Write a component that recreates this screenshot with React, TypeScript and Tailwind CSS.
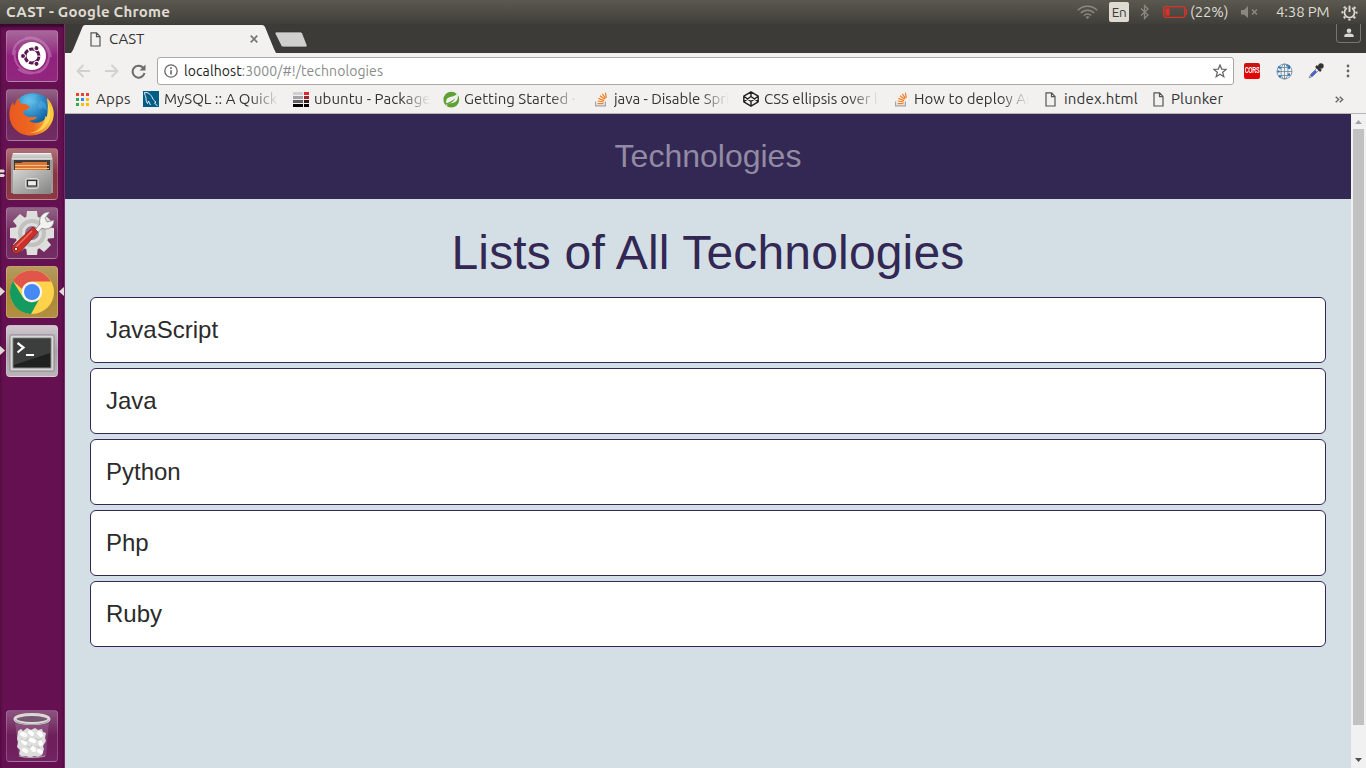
import React from "react";

const uiFont = "font-['Ubuntu','Noto_Sans',sans-serif]";

function DocIcon({ className = "" }: { className?: string }) {
  return (
    <svg width="11" height="15" viewBox="0 0 11 15" className={className} fill="none" stroke="#555" strokeWidth="1.2">
      <path d="M1 .8h5.6L10 4.4v9.6H1zM6.5 1v3.6H10" />
    </svg>
  );
}

function StackIcon() {
  return (
    <svg width="12" height="15" viewBox="0 0 12 15" fill="none">
      <path d="M.6 9.5v4.4h9.8V9.5" stroke="#a0a3a5" strokeWidth="1.2" />
      <path d="M2.5 11.7h6M2.7 9l6 1M3.4 6.4l5.7 2.2M5 3.8l4.8 3.4M7.4 1.8l3.1 4.6M10.4.6l.9 5.2" stroke="#f48024" strokeWidth="1.2" />
    </svg>
  );
}

function AppsIcon() {
  const colors = ["#ea4335", "#ea4335", "#ea4335", "#34a853", "#4285f4", "#fbbc05", "#34a853", "#fbbc05", "#fbbc05"];
  return (
    <svg width="13" height="13" viewBox="0 0 13 13">
      {colors.map((c, i) => (
        <rect key={i} x={(i % 3) * 5} y={Math.floor(i / 3) * 5} width="3" height="3" fill={c} />
      ))}
    </svg>
  );
}

function MySqlIcon() {
  return (
    <svg width="16" height="16" viewBox="0 0 16 16" fill="none">
      <rect width="16" height="16" fill="#005d87" />
      <path d="M1.5 1.5C5 1 8 3.500 9.500 7c.8 2 2 3 3.500 4.200L11.500 12l3 3M1.500 1.500C1.500 4 3 5 3 7.500c0 2 .5 4 1.500 5L5.500 10l2 4" stroke="#fff" strokeWidth=".9" />
    </svg>
  );
}

function PackageIcon() {
  const rows = [["#d0d0d4", "#e8242c"], ["#a3a3a8", "#98242c"], ["#606064", "#38161a"], ["#000", "#000"]];
  return (
    <svg width="16" height="16" viewBox="0 0 16 16" shapeRendering="crispEdges">
      {rows.map(([a, b], i) => (
        <g key={i}>
          <rect y={i * 4 + 1} width="10" height="3" fill={a} />
          <rect x="11" y={i * 4 + 1} width="5" height="3" fill={b} />
        </g>
      ))}
    </svg>
  );
}

function SpringIcon() {
  return (
    <svg width="17" height="17" viewBox="0 0 17 17">
      <circle cx="8.300" cy="8.700" r="7.900" fill="#5fa134" />
      <path d="M14.300 2C15.500 6 15 9 12.500 10.800C9.500 12.800 6 12 3.300 12.300C2.800 9.500 3.500 7 7 6C10.500 5.200 13 4.700 14.300 2z" fill="#f2f1f0" />
      <path d="M3 13.500c4-.5 7.500-2.500 9.500-6.500-2.500 2.500-5.500 4-9 5.200z" fill="#5fa134" />
      <circle cx="3.700" cy="14" r=".7" fill="#f2f1f0" />
    </svg>
  );
}

function CodepenIcon() {
  return (
    <svg width="16" height="16" viewBox="0 0 16 16" fill="none" stroke="#222" strokeWidth="1.400" strokeLinejoin="round">
      <path d="M8 .8l7.200 4.400v5.600L8 15.200.8 10.800V5.200zM8 .8v4.700M8 10.500v4.700M.8 5.200L8 10.500l7.200-5.300M.8 10.800L8 5.500l7.200 5.300" />
    </svg>
  );
}

type Bookmark = { icon: React.ReactNode; label: string; box: string; text: string; fade?: boolean };

const bookmarks: Bookmark[] = [
  { icon: <AppsIcon />, label: "Apps", box: "w-[67px] gap-[7px]", text: "tracking-[0.2px]" },
  { icon: <MySqlIcon />, label: "MySQL :: A Quick", box: "w-[150px] gap-[5px]", text: "w-[115px]", fade: true },
  { icon: <PackageIcon />, label: "ubuntu - Package", box: "w-[150px] gap-[5px]", text: "w-[116px] tracking-[0.05px]", fade: true },
  { icon: <SpringIcon />, label: "Getting Started · ", box: "w-[152px] gap-[4px]", text: "w-[115px]", fade: true },
  { icon: <StackIcon />, label: "java - Disable Spri", box: "w-[148px] gap-[7px]", text: "w-[115px] tracking-[-0.05px]", fade: true },
  { icon: <CodepenIcon />, label: "CSS ellipsis over li", box: "w-[152px] gap-[5px]", text: "w-[115px] tracking-[-0.05px]", fade: true },
  { icon: <StackIcon />, label: "How to deploy An", box: "w-[150px] gap-[7px]", text: "w-[115px] tracking-[0.05px]", fade: true },
  { icon: <DocIcon />, label: "index.html", box: "w-[108px] gap-[8px]", text: "tracking-[0.2px]" },
  { icon: <DocIcon />, label: "Plunker", box: "gap-[7px]", text: "tracking-[0.15px]" },
];

function TopBar() {
  return (
    <header className="flex h-6 shrink-0 items-center bg-linear-to-b from-[#5b594f] to-[#403f3a] pl-[6px] text-[#dfdbd2]">
      <span className="w-[1071px] text-[15px] leading-6 font-bold tracking-[0.25px] whitespace-nowrap">CAST - Google Chrome</span>
      <svg width="21" height="16" viewBox="0 0 21 16" fill="none" stroke="#8b887f" strokeWidth="1.500">
        <path d="M.8 6.300C6 .8 15 .8 20.200 6.300M3.800 9c3.500-3.800 9.900-3.800 13.400 0M6.900 11.600c2-2.200 5.200-2.200 7.200 0" />
        <path d="M8.500 13l2 2 2-2c-1-1-3-1-4 0z" fill="#8b887f" stroke="none" />
      </svg>
      <span className="ml-[11px] flex h-5 w-5 items-center justify-center rounded-[2px] bg-[#dfdbd2] text-[13.500px] tracking-[-0.4px] text-[#3c3b37]">En</span>
      <svg width="10" height="16" viewBox="0 0 10 16" className="ml-[11px]" fill="none" stroke="#8b887f" strokeWidth="1.300">
        <path d="M1 4.500l7 6.500-3.500 3.500v-13L8 5 1 11.500" />
      </svg>
      <svg width="25" height="14" viewBox="0 0 25 14" className="ml-[13px]" fill="none">
        <rect x=".8" y="1.700" width="21" height="10.600" rx="1.500" stroke="#e0302b" strokeWidth="1.300" />
        <path d="M22 4.500h1.500v5H22" stroke="#e0302b" />
        <rect x="2.500" y="3.500" width="4" height="7" fill="#e0302b" />
      </svg>
      <span className="ml-[2px] w-[50px] text-[15px] tracking-[-0.1px]">(22%)</span>
      <svg width="19" height="14" viewBox="0 0 19 14" fill="#8b887f">
        <path d="M1 5h3l4-4v12L4 9.500H1z" />
        <path d="M12 4.500l5 5m0-5l-5 5" stroke="#8b887f" strokeWidth="1.500" />
      </svg>
      <span className="ml-[17px] w-[65px] text-[15px] tracking-[-0.15px] whitespace-nowrap">4:38 PM</span>
      <svg width="17" height="17" viewBox="0 0 17 17" fill="none" stroke="#dfdbd2">
        <circle cx="8.500" cy="8.500" r="5" strokeWidth="1.700" />
        <circle cx="8.500" cy="8.500" r="7" strokeWidth="2" strokeDasharray="2.200 3.298" strokeDashoffset="1.100" />
        <path d="M8.500 0v7.500" stroke="#4b4942" strokeWidth="4.600" />
        <path d="M8.500 1.500v6.500" strokeWidth="1.900" />
      </svg>
    </header>
  );
}

function UbuntuArt() {
  return (
    <g>
      <path d="M7 25c0-17 20-21 31-11 8 9 6 22-4 28M19 8c13-3 24 6 26 19M9 20c-3 16 10 25 25 22M12 39c10 8 27 5 31-11" stroke="#e1a2d5" strokeOpacity=".4" strokeWidth="2" fill="none" />
      <circle cx="26" cy="26" r="14" fill="#fff" />
      <circle cx="26" cy="26" r="7" fill="none" stroke="#5c1750" strokeWidth="3" strokeDasharray="13.200 1.460" strokeDashoffset="-.7" />
      {[0, 120, 240].map((a) => (
        <circle key={a} cx="17" cy="26" r="2.500" fill="#5c1750" stroke="#fff" strokeWidth="1" transform={`rotate(${a} 26 26)`} />
      ))}
    </g>
  );
}

function FirefoxArt() {
  return (
    <g>
      <circle cx="27" cy="24" r="20" fill="url(#globe)" />
      <path d="M18 9c3-3 9-5 14-3l-3 4 3 3-5 2-4-1-3 2-4-2zM35 11l5 4 1 6-4-2-4 1-1-4z" fill="#65bdec" opacity=".35" />
      <path d="M41 9c7 7 9 18 4 26-7 13-27 16-37 4C2 32 2 20 7 13l1 4 4-8 3 6c4-1 7 1 9 3-2 3-6 3-7 5 1 3 4 5 8 5 3 0 4-1 6 1-3 2-6 2-8 3 8 4 15 1 18-5 3-7 0-11 0-18z" fill="url(#fox)" />
      <path d="M42 14c4 8 3 17-2 23-5 6-11 7-16 7 10-2 15-9 15-17l2 1z" fill="#ffe566" opacity=".7" />
    </g>
  );
}

function FilesArt() {
  return (
    <g>
      <path d="M7 5h38l2 7v5H5v-5z" fill="url(#metal)" />
      <path d="M5 11h42v34H5z" fill="#9b9b99" />
      <path d="M6 11h40M7 5.500h38" stroke="#f4f4f2" />
      <path d="M8 12h36v10H8z" fill="#403a38" />
      <path d="M9 15h6l2-1h24v8H9z" fill="#d87538" />
      <path d="M9 17.500h34M9 20.500h34" stroke="#ffc27c" strokeWidth="1.200" />
      <path d="M7 22h38v24H7z" fill="url(#cabinet)" />
      <rect x="19.500" y="30.500" width="13" height="10" rx="2" fill="#aaa" stroke="#d9d9d9" />
      <rect x="21.500" y="32.500" width="9" height="5.500" fill="#eee" stroke="#333" strokeWidth="1.200" />
    </g>
  );
}

function SettingsArt() {
  return (
    <g>
      {[0, 45, 90, 135, 180, 225, 270, 315].map((a) => (
        <path key={a} d="M20 13l1-9h10l1 9z" fill="#dededc" transform={`rotate(${a} 26 26)`} />
      ))}
      <circle cx="26" cy="26" r="17" fill="#dededc" />
      <circle cx="26" cy="26" r="12" fill="none" stroke="#c1c1c1" strokeWidth="4" />
      <circle cx="26" cy="26" r="7" fill="#9a7090" />
      <path d="M28 24l6-7c-2-6 3-13 10-12l-5 6 2 4 7-2c0 7-6 11-12 8l-6 7z" fill="#f2f2f0" stroke="#777" strokeWidth=".7" />
      <path d="M27 20l5 5-18 20c-3 3-9 1-8-4 0-2 2-3 3-4z" fill="#cd3029" stroke="#7c211b" strokeWidth=".8" />
      <path d="M26 24L10 40" stroke="#ee7268" strokeWidth="1.500" />
      <circle cx="10" cy="42" r="1.800" fill="#f5e9e6" stroke="#742019" />
    </g>
  );
}

function ChromeArt() {
  return (
    <g>
      <circle cx="26" cy="26" r="22" fill="#ffd24c" />
      <path d="M6.900 15A22 22 0 0 1 45 15.500H26A10.500 10.500 0 0 0 16 23z" fill="#e1554a" />
      <path d="M6.900 15A22 22 0 0 0 25 48l8-14.500A10.500 10.500 0 0 1 16.900 31.200z" fill="#149b60" />
      <circle cx="26" cy="26" r="10.200" fill="#f6f5f2" />
      <circle cx="26" cy="26" r="8" fill="#4688f4" />
    </g>
  );
}

function TerminalArt() {
  return (
    <g>
      <rect x="4" y="10" width="44" height="36" rx="1" fill="#d8d8d6" stroke="#8b8589" />
      <rect x="7" y="13" width="38" height="30" fill="#1f2120" stroke="#898b89" />
      <path d="M8 14h36v14L8 40z" fill="#4b4e4c" opacity=".65" />
      <path d="M11.500 18l6 4.500-6 5" stroke="#fff" strokeWidth="2.200" fill="none" />
      <path d="M20 30h8" stroke="#fff" strokeWidth="2" />
    </g>
  );
}

function TrashArt() {
  return (
    <g>
      <path d="M9 11l4 35c3 3 23 3 27 0l3-35z" fill="#d9c2d5" opacity=".2" />
      <path d="M12 21l3-2 2 2 4-3 4 2 4-2 3 2 4-1 1 3 3 1-1 5 1 3-3 5 1 3-2 6-4 2-4-1-4 2-4-2-4 1-3-3 1-4-3-3 1-5-1-3z" fill="#dededc" />
      <path d="M16 24l3 1M24 22l2 2M33 23l2 2M17 31l2 2M25 30l3 1M34 32l1 2M18 40l2 1M26 38l2 2M33 41l2 1" stroke="#fff" strokeWidth="4" strokeLinecap="round" />
      <path d="M15 29l5 2 2-3M29 28l3 2 4-1M21 36l3 2 2-3M30 36l4 2" stroke="#b5b5b0" strokeWidth=".8" fill="none" />
      <path d="M13 46c7 2 19 2 26 0" stroke="#aca7aa" fill="none" />
      <ellipse cx="26" cy="9" rx="17" ry="4.500" fill="#785773" stroke="#d9dad5" strokeWidth="3" />
      <path d="M9 10c5 6 29 6 34 0" stroke="#a5a5a1" fill="none" />
    </g>
  );
}

function Tile({ tone, children, left = 0, right = false }: { tone: string; children: React.ReactNode; left?: number; right?: boolean }) {
  return (
    <div className="relative flex h-[52px] w-full shrink-0 justify-center">
      <div className={`flex h-[52px] w-[52px] overflow-hidden rounded-[4px] border border-white/20 ${tone}`}>
        <svg width="52" height="52" viewBox="0 0 52 52" className="-m-px shrink-0">
          {children}
        </svg>
      </div>
      {left === 1 && <svg className="absolute top-[21px] left-0" width="5" height="9" viewBox="0 0 5 9"><path d="M0 0l5 4.500L0 9z" fill="#dfdbd2" /></svg>}
      {left === 2 && <svg className="absolute top-[21px] left-0" width="5" height="9" viewBox="0 0 5 9"><path d="M0 .5h3.500L5 2 3.500 3.500H0zM0 5h3.500L5 6.500 3.500 8H0z" fill="#dfdbd2" /></svg>}
      {right && <svg className="absolute top-[21px] right-0" width="5" height="9" viewBox="0 0 5 9"><path d="M5 0L0 4.500 5 9z" fill="#dfdbd2" /></svg>}
    </div>
  );
}

function Launcher() {
  return (
    <aside className="flex w-[65px] shrink-0 flex-col gap-[7px] border-r border-[#7c2e6c] bg-[#651051] pt-[6px] pb-[6px] shadow-[inset_0_3px_3px_#360a2d]">
      <svg width="0" height="0" className="absolute">
        <defs>
          <radialGradient id="globe" cx=".4" cy=".2" r=".8"><stop stopColor="#65c6ed" /><stop offset=".6" stopColor="#1c73b5" /><stop offset="1" stopColor="#092d6d" /></radialGradient>
          <linearGradient id="fox" x1="0" y1="0" x2="1" y2="0"><stop stopColor="#e95820" /><stop offset=".55" stopColor="#ee6a20" /><stop offset="1" stopColor="#ffd33f" /></linearGradient>
          <linearGradient id="metal" x1="0" y1="0" x2="0" y2="1"><stop stopColor="#dededb" /><stop offset="1" stopColor="#959595" /></linearGradient>
          <linearGradient id="cabinet" x1="0" y1="0" x2="1" y2="1"><stop stopColor="#d4d4d2" /><stop offset="1" stopColor="#838383" /></linearGradient>
        </defs>
      </svg>
      <Tile tone="bg-linear-to-b from-[#a6689b] via-[#92217e] to-[#91277d]"><UbuntuArt /></Tile>
      <Tile tone="bg-linear-to-b from-[#926286] via-[#6b2559] to-[#722e64]"><FirefoxArt /></Tile>
      <Tile tone="bg-linear-to-b from-[#ad7078] via-[#883442] to-[#8c3944]" left={2}><FilesArt /></Tile>
      <Tile tone="bg-linear-to-b from-[#936386] via-[#712960] to-[#722d63]"><SettingsArt /></Tile>
      <Tile tone="bg-linear-to-b from-[#b59b60] via-[#ac8736] to-[#b28e41]" left={1} right><ChromeArt /></Tile>
      <Tile tone="bg-linear-to-b from-[#d0c7cf] via-[#aaa1a9] to-[#bbb3ba]" left={1}><TerminalArt /></Tile>
      <div className="mt-auto"><Tile tone="bg-linear-to-b from-[#8c5380] via-[#6c1d5a] to-[#722462]"><TrashArt /></Tile></div>
    </aside>
  );
}

function TabStrip() {
  return (
    <div className="flex h-[29px] bg-[#3c3b37] pl-[6px]">
      <div className="grid w-[205px]">
        <svg width="205" height="29" viewBox="0 0 205 29" className="col-start-1 row-start-1">
          <path d="M0 29L2 26 11.500 3q1-2 2.500-2h177q2 0 3 2l9 22 2 4z" fill="#f2f1f0" />
        </svg>
        <div className="z-10 col-start-1 row-start-1 flex items-center pt-px pl-[19px]">
          <DocIcon />
          <span className="ml-2 w-[141px] text-[15px] tracking-[-0.1px] text-[#333]">CAST</span>
          <svg width="8" height="8" viewBox="0 0 9 9" stroke="#777" strokeWidth="1.900"><path d="M.8.8l7.400 7.400M8.200.8L.8 8.200" /></svg>
        </div>
      </div>
      <svg width="34" height="17" viewBox="0 0 34 17" className="-ml-[2px] mt-[7px]">
        <path d="M1.500 1h25q1.500 0 2 1.500L33 14q.7 2-1 2H9.500Q7.500 16 7 14.500L1 2.500z" fill="#d0cfcd" stroke="#32312e" strokeWidth=".7" />
      </svg>
      <div className="mr-[5px] ml-auto flex h-[19px] w-[25px] items-center justify-center rounded-b-[4px] border border-t-0 border-[#77756f]">
        <svg width="10" height="10" viewBox="0 0 10 10" fill="#d8d6d1"><circle cx="5" cy="2.700" r="2.300" /><path d="M.3 9V7.500Q.5 5.500 5 5.500t4.700 2V9z" /></svg>
      </div>
    </div>
  );
}

function Toolbar() {
  return (
    <div className="flex h-9 items-center bg-[#f2f1f0] pl-[11px]">
      <svg width="15" height="14" viewBox="0 0 15 14" fill="none" stroke="#d2d1d0" strokeWidth="1.900"><path d="M14 7H2M7.500 1L1.500 7l6 6" /></svg>
      <svg width="15" height="14" viewBox="0 0 15 14" className="ml-[13px]" fill="none" stroke="#d2d1d0" strokeWidth="1.900"><path d="M1 7h12M7.500 1l6 6-6 6" /></svg>
      <svg width="15" height="15" viewBox="0 0 15 15" className="ml-[12px]" fill="none" stroke="#6c6b6a" strokeWidth="2"><path d="M12 3.500A6 6 0 1 0 13.500 9" /><path d="M14.500.5v6h-6z" fill="#6c6b6a" stroke="none" /></svg>
      <div className="ml-[11px] flex h-7 w-[1077px] items-center rounded-[3px] border border-[#a9a8a7] bg-white pr-[6px] pl-[6px]">
        <svg width="14" height="14" viewBox="0 0 14 14" fill="none" stroke="#666" strokeWidth="1.300"><circle cx="7" cy="7" r="6.200" /><path d="M7 6.200v4.300M7 3.300v1.600" strokeWidth="1.600" /></svg>
        <span className="ml-[6px] text-[14px] tracking-[0.09px] text-[#8a8a8a]"><span className="text-[#222]">localhost</span>:3000/#!/technologies</span>
        <svg width="14" height="14" viewBox="0 0 14 14" className="ml-auto" fill="none" stroke="#666" strokeWidth="1.300"><path d="M7 1l1.700 4.100 4.500.3-3.500 2.900 1.100 4.400L7 10.300l-3.800 2.400 1.100-4.400L.8 5.400l4.500-.3z" /></svg>
      </div>
      <div className="ml-[10px] flex h-4 w-4 items-center justify-center rounded-[2px] bg-linear-to-b from-[#c91414] to-[#e90000]">
        <span className="scale-y-150 font-['Liberation_Sans',sans-serif] text-[5.500px] leading-none font-bold tracking-[-0.3px] text-white">CORS</span>
      </div>
      <svg width="17" height="17" viewBox="0 0 17 17" className="ml-4" fill="none" stroke="#718ca4" strokeWidth=".9"><circle cx="8.500" cy="8.500" r="7.500" /><ellipse cx="8.500" cy="8.500" rx="3.500" ry="7.500" /><path d="M1 8.500h15M2.500 4.500h12M2.500 12.500h12M8.500 1v15" /><path d="M2 4l3 1M11 2l3 2M3 13l2 1M12 12l2-1M1.500 8.500h2M12 5h2" stroke="#2e7abb" strokeWidth="2" /></svg>
      <svg width="16" height="16" viewBox="0 0 16 16" className="ml-[15px]" fill="none"><path d="M1 15l2-4 6-6 2 2-6 6z" fill="#e8ecfa" stroke="#8a8a92" /><path d="M3 13l5-5" stroke="#3355db" strokeWidth="2" /><path d="M8 3l5 5M10 5l3-3" stroke="#333" strokeWidth="2.500" /><circle cx="13" cy="3" r="2.700" fill="#333" /></svg>
      <svg width="4" height="14" viewBox="0 0 4 14" className="ml-[22px]" fill="#666"><circle cx="2" cy="2" r="1.400" /><circle cx="2" cy="7" r="1.400" /><circle cx="2" cy="12" r="1.400" /></svg>
    </div>
  );
}

function BookmarkBar() {
  return (
    <div className="flex h-[25px] items-start border-b border-[#b6b5b4] bg-[#f2f1f0] pl-[11px] text-[15px] leading-5 text-[#333]">
      {bookmarks.map((b, i) => (
        <div key={i} className={`flex h-5 shrink-0 items-center ${b.box}`}>
          <span className="shrink-0">{b.icon}</span>
          <span className={`overflow-hidden whitespace-nowrap ${b.text} ${b.fade ? "[mask-image:linear-gradient(to_right,black_75%,transparent)]" : ""}`}>{b.label}</span>
        </div>
      ))}
      <svg width="9" height="7" viewBox="0 0 9 7" className="mt-[7px] mr-[22px] ml-auto" fill="none" stroke="#666" strokeWidth="1.400"><path d="M.7.7l3 2.800-3 2.800M4.700.7l3 2.800-3 2.800" /></svg>
    </div>
  );
}

const technologies = ["JavaScript", "Java", "Python", "Php", "Ruby"];

function Page() {
  return (
    <div className="flex min-h-0 flex-1 font-['Liberation_Sans',Arial,sans-serif]">
      <main className="min-w-0 flex-1 bg-[#d4dfe5]">
        <div className="flex h-[85px] items-center justify-center bg-[#322853] pb-[2px] text-[32px] text-[#928ba3]">Technologies</div>
        <h1 className="mt-[26px] text-center text-[48px] leading-[56px] tracking-[0.17px] text-[#322853]">Lists of All Technologies</h1>
        <ul className="mt-4 flex flex-col gap-[5px] px-[25px]">
          {technologies.map((name) => (
            <li key={name} className="flex h-[66px] items-center rounded-[6px] border border-[#322853] bg-white px-[15px] text-[24px] text-[#2b2b2b]">{name}</li>
          ))}
        </ul>
      </main>
      <div className="flex w-[15px] flex-col items-center bg-[#f1f1f1] pt-[6px] pb-[6px]">
        <svg width="7" height="4" viewBox="0 0 7 4"><path d="M0 4l3.500-4L7 4z" fill="#a3a3a3" /></svg>
        <div className="mt-[5px] h-[596px] w-[11px] bg-[#c1c1c1]" />
        <svg width="7" height="4" viewBox="0 0 7 4" className="mt-auto"><path d="M0 0h7L3.500 4z" fill="#505050" /></svg>
      </div>
    </div>
  );
}

export default function App() {
  return (
    <div className={`flex h-[768px] w-[1366px] flex-col overflow-hidden ${uiFont}`}>
      <TopBar />
      <div className="flex min-h-0 flex-1">
        <Launcher />
        <div className="flex min-w-0 flex-1 flex-col">
          <TabStrip />
          <Toolbar />
          <BookmarkBar />
          <Page />
        </div>
      </div>
    </div>
  );
}
